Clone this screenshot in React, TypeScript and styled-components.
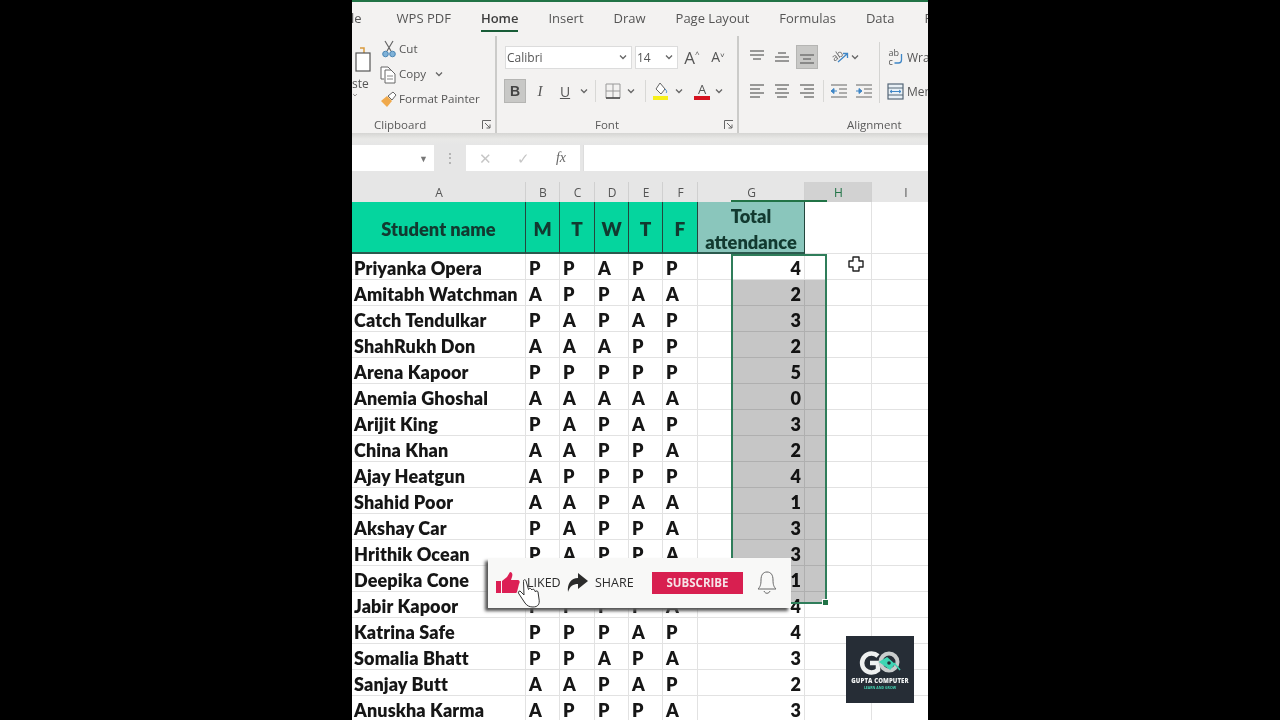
import React from "react";
import styled, { createGlobalStyle } from "styled-components";

const Global = createGlobalStyle`
  html, body { margin: 0; padding: 0; background: #000; height: 100%; overflow: hidden; }
  #root { height: 100%; }
`;
const COLS = "174px 34px 35px 34px 34px 35px 107px 67px 68px";

const Page = styled.div`height: 720px; background: #000; display: flex; justify-content: center; padding-left: 0;`;
const Frame = styled.div`
  position: relative; width: 576px; height: 720px; overflow: hidden; background: #fff;
  font-family: "Open Sans", "Liberation Sans", sans-serif; color: #444; filter: blur(0.4px);
`;
const TopLine = styled.div`height: 2px; background: #217346;`;
const Tabs = styled.div`height: 34px; background: #f3f2f1; display: flex; gap: 30px; margin-left: -11px; align-items: flex-start; padding-top: 8px; box-sizing: border-box; font-size: 13px; color: #555;`;
const Tab = styled.div<{ $on?: boolean; $mr?: number }>`
  height: 20px; line-height: 16px; white-space: nowrap; margin-right: ${(p) => p.$mr ?? 0}px;
  ${(p) => p.$on && `font-weight: 600; color: #3f3f3f; border-bottom: 2px solid #185c37;`}
`;
const Ribbon = styled.div`height: 97px; background: #f3f2f1; display: flex; overflow: hidden;`;
const Group = styled.div<{ $w: number; $sep?: boolean }>`
  flex: 0 0 ${(p) => p.$w}px; width: ${(p) => p.$w}px; display: flex; flex-direction: column; box-sizing: border-box;
  ${(p) => p.$sep && `border-left: 2px solid #cbcbc9;`}
`;
const GroupBody = styled.div`flex: 1; min-height: 0; display: flex;`;
const Footer = styled.div`height: 17px; margin-bottom: 0; display: flex; align-items: center; font-size: 11.5px; color: #5a5a5a; padding-right: 3px;`;
const FooterLabel = styled.span<{ $ml: number }>`margin-left: ${(p) => p.$ml}px; white-space: nowrap;`;
const Launcher = styled.svg`margin-left: auto; width: 10px; height: 10px;`;
const PasteCol = styled.div`width: 27px; display: flex; flex-direction: column; align-items: flex-start; padding-top: 5px; font-size: 12px; color: #555; line-height: 14px;`;
const PasteText = styled.span`margin-top: 5px;`;
const ClipCol = styled.div`display: flex; flex-direction: column; padding-top: 0;`;
const ClipRow = styled.div`height: 25px; display: flex; align-items: center; font-size: 11.6px; color: #555; white-space: nowrap;`;
const ClipIcon = styled.svg`width: 20px; height: 20px; flex: none;`;
const Rows = styled.div`padding-top: 9px; display: flex; flex-direction: column; gap: 10px;`;
const ToolRow = styled.div<{ $ml?: number }>`height: 24px; display: flex; align-items: center; margin-left: ${(p) => p.$ml ?? 0}px;`;
const Combo = styled.div<{ $w: number; $ml?: number }>`
  width: ${(p) => p.$w}px; height: 23px; margin-left: ${(p) => p.$ml ?? 0}px; box-sizing: border-box; background: #fff;
  border: 1px solid #dcdcdc; display: flex; align-items: center; justify-content: space-between; padding: 0 3px 0 1px;
  font-size: 12px; color: #555;
`;
const Tool = styled.div<{ $w: number; $ml?: number; $on?: boolean }>`
  flex: none; width: ${(p) => p.$w}px; height: 24px; margin-left: ${(p) => p.$ml ?? 0}px; display: flex; align-items: center; justify-content: center; box-sizing: border-box;
  font-size: 14px; color: #555;
  ${(p) => p.$on && `background: #c8c8c6; border: 1px solid #b5b5b3;`}
`;
const Bold = styled.span`font-family: "Liberation Sans", sans-serif; font-weight: 700; font-size: 14px; color: #444;`;
const Ital = styled.span`font-family: "Liberation Serif", serif; font-style: italic; font-size: 15px; color: #555;`;
const Under = styled.span`font-size: 14px; text-decoration: underline; color: #555;`;
const ToolSep = styled.div<{ $ml: number }>`flex: none; width: 1px; height: 22px; margin-left: ${(p) => p.$ml}px; background: #d8d8d6;`;
const BigA = styled.div<{ $size: number }>`font-size: ${(p) => p.$size}px; color: #555; line-height: 1; display: flex;`;
const Caret = styled.span`font-size: 8px; line-height: 10px;`;
const ColorA = styled.div`display: flex; flex-direction: column; align-items: center; font-size: 13px; line-height: 12px; color: #555;`;
const ColorBar = styled.div<{ $c: string }>`width: 16px; height: 4px; background: ${(p) => p.$c}; margin-top: 1px;`;
const AlignLeft = styled.div`width: 141px; flex: none; box-sizing: border-box; margin: 6px 0 13px; border-right: 1px solid #d4d4d2; display: flex;`;
const AlignRight = styled.div`padding-left: 7px; display: flex; flex-direction: column; gap: 10px; padding-top: 9px; font-size: 12px; color: #555; white-space: nowrap;`;
const AlignItem = styled.div`height: 24px; display: flex; align-items: center; gap: 3px;`;
const AlignRows = styled(Rows)`padding-top: 3px;`;

const FormulaBand = styled.div`height: 49px; box-sizing: border-box; padding: 12px 0 11px; background: linear-gradient(#d5d5d3 0, #e9e9e7 6px, #e6e6e6 12px); display: flex;`;
const NameBox = styled.div`width: 82px; background: #fff; display: flex; align-items: center; justify-content: flex-end; padding-right: 6px; box-sizing: border-box; font-size: 9px; color: #777;`;
const Grip = styled.div`width: 32px; text-align: center; color: #999; font-size: 12px; line-height: 26px;`;
const FxBox = styled.div`width: 114px; background: #fff; display: flex; align-items: center; justify-content: space-between; padding: 0 14px 0 13px; box-sizing: border-box; font-size: 15px; color: #c6c6c6;`;
const Fx = styled.span`font-family: "Liberation Serif", serif; font-style: italic; color: #666; font-size: 14px;`;
const FormulaInput = styled.div`flex: 1; margin-left: 3px; background: #fff; border-left: 1px solid #ddd;`;

const ColHeads = styled.div`height: 20px; display: grid; grid-template-columns: ${COLS}; background: #e6e6e6; font-size: 12px; color: #555;`;
const ColHead = styled.div<{ $on?: boolean }>`
  display: flex; align-items: center; justify-content: center; border-right: 1px solid #d0d0d0; box-sizing: border-box; padding-left: 1px;
  ${(p) => p.$on && `background: #d2d2d2; color: #217346; font-weight: 400;`}
`;
const Sheet = styled.div`position: relative; background: #fff; font-family: Lato, "Open Sans", sans-serif; font-weight: 800; color: #161616;`;
const HeadRow = styled.div`height: 52px; display: grid; grid-template-columns: ${COLS}; grid-template-rows: 52px; box-sizing: border-box;`;
const HeadCell = styled.div<{ $bg: string; $big?: boolean }>`
  background: ${(p) => p.$bg}; display: flex; align-items: center; justify-content: center; text-align: center; box-sizing: border-box;
  border-right: 1px solid #24463c; border-bottom: 2px solid #2b5a4e; color: #123a30; line-height: 26px; padding-top: 4px; min-height: 0; overflow: visible;
  font-size: ${(p) => (p.$big ? 19 : 18.3)}px;
`;
const BlankCell = styled.div`border-right: 1px solid #e2e2e2; border-bottom: 1px solid #e2e2e2;`;
const Row = styled.div`height: 26px; display: grid; grid-template-columns: ${COLS}; grid-template-rows: 26px; font-size: 18px; letter-spacing: 0.12px; white-space: nowrap;`;
const Cell = styled.div<{ $right?: boolean; $pl?: number }>`
  border-right: 1px solid #e2e2e2; border-bottom: 1px solid #e2e2e2; box-sizing: border-box; display: flex; align-items: center; line-height: 22px; padding-top: 3px; min-height: 0;
  padding-left: ${(p) => p.$pl ?? 3}px; ${(p) => p.$right && `justify-content: flex-end; padding-right: 3px;`}
  overflow: visible;
`;
const SelBox = styled.div`position: absolute; left: 379px; top: 52px; width: 96px; height: 350px; box-sizing: border-box; border: 2px solid #2f7d5a; pointer-events: none;`;
const SelFill = styled.div`position: absolute; left: 0; right: 0; top: 24px; bottom: 0; background: #c6c6c6; mix-blend-mode: multiply;`;
const SelHandle = styled.div`position: absolute; right: -4px; bottom: -4px; width: 5px; height: 5px; background: #217346; border: 1px solid #fff;`;
const HeadMark = styled.div`position: absolute; left: 379px; top: -2px; width: 96px; height: 2px; background: #217346;`;
const PlusCursor = styled.svg`position: absolute; left: 494px; top: 254px; width: 20px; height: 20px;`;
const Popup = styled.div`
  position: absolute; left: 136px; top: 558px; width: 303px; height: 50px; background: #f8f8f7; box-shadow: -3px 3px 3px #555;
  display: flex; align-items: center; font-size: 12.5px; color: #2c2c2c; font-family: "Open Sans", sans-serif; line-height: 16px; padding-bottom: 1px; box-sizing: border-box;
`;
const Thumb = styled.svg`width: 26px; height: 24px; margin-left: 7px; flex: none;`;
const Liked = styled.span`margin-left: 6px; width: 36px;`;
const ShareIcon = styled.svg`width: 24px; height: 22px; margin-left: 2px; flex: none;`;
const ShareText = styled.span`margin-left: 6px; width: 57px;`;
const SubBtn = styled.div`width: 91px; height: 22px; background: #d81f50; color: #f6e4e8; font-weight: 700; font-size: 11.5px; display: flex; align-items: center; justify-content: center; flex: none;`;
const Bell = styled.svg`width: 22px; height: 26px; margin-left: 13px; flex: none;`;
const Hand = styled.svg`position: absolute; left: 165px; top: 578px; width: 24px; height: 30px;`;
const Logo = styled.div`position: absolute; left: 494px; top: 636px; width: 68px; height: 67px; background: #262d36; display: flex; flex-direction: column; align-items: center; box-sizing: border-box; padding-top: 14px;`;
const LogoArt = styled.svg`width: 48px; height: 26px; flex: none;`;
const LogoName = styled.div`font-size: 6px; font-weight: 800; color: #f2f4f4; letter-spacing: 0.1px; white-space: nowrap; line-height: 7px; margin-top: 2px; font-family: "Open Sans", sans-serif;`;
const LogoSub = styled.div`font-size: 3.5px; font-weight: 700; color: #45d6b5; white-space: nowrap; line-height: 5px; font-family: "Open Sans", sans-serif;`;

const Chev = ({ w = 10 }: { w?: number }) => (
  <svg width={w} height="8" viewBox="0 0 10 8"><path d="M2 2.5 5 5.5 8 2.5" fill="none" stroke="#666" strokeWidth="1.3" /></svg>
);
const Lines = ({ ys, xs }: { ys: number[]; xs: [number, number][] }) => (
  <svg width="20" height="20" viewBox="0 0 20 20">
    {ys.map((y, i) => (
      <line key={i} x1={xs[i][0]} x2={xs[i][1]} y1={y} y2={y} stroke="#666" strokeWidth="1.3" />
    ))}
  </svg>
);
const LauncherIcon = () => (
  <Launcher viewBox="0 0 10 10"><path d="M.5 9V.5H9M3 3l5 5M8 4.5V8H4.5" fill="none" stroke="#666" strokeWidth="1" /></Launcher>
);
const Indent = ({ flip }: { flip?: boolean }) => (
  <svg width="20" height="20" viewBox="0 0 20 20">
    <path d="M2 4h16M10 8h8M10 12h8M2 16h16" stroke="#666" strokeWidth="1.2" />
    <path d={flip ? "M2 10h5M5 7.5 8 10l-3 2.5z" : "M3 10h5M5 7.5 2 10l3 2.5z"} stroke="#3f86c6" fill="#3f86c6" strokeWidth="1" />
  </svg>
);

const data: [string, string, number][] = [
  ["Priyanka Opera", "PPAPP", 4], ["Amitabh Watchman", "APPAA", 2], ["Catch Tendulkar", "PAPAP", 3],
  ["ShahRukh Don", "AAAPP", 2], ["Arena Kapoor", "PPPPP", 5], ["Anemia Ghoshal", "AAAAA", 0],
  ["Arijit King", "PAPAP", 3], ["China Khan", "AAPPA", 2], ["Ajay Heatgun", "APPPP", 4],
  ["Shahid Poor", "AAPAA", 1], ["Akshay Car", "PAPPA", 3], ["Hrithik Ocean", "PAPPA", 3],
  ["Deepika Cone", "PAPPA", 1], ["Jabir Kapoor", "PPPPA", 4], ["Katrina Safe", "PPPAP", 4],
  ["Somalia Bhatt", "PPAPA", 3], ["Sanjay Butt", "AAPAP", 2], ["Anuskha Karma", "APPPA", 3],
];

export default function App() {
  return (
    <Page>
      <Global />
      <Frame>
        <TopLine />
        <Tabs>
          <Tab $mr={5}>File</Tab>
          <Tab>WPS PDF</Tab>
          <Tab $on>Home</Tab>
          <Tab>Insert</Tab>
          <Tab>Draw</Tab>
          <Tab>Page Layout</Tab>
          <Tab>Formulas</Tab>
          <Tab>Data</Tab>
          <Tab>Review</Tab>
        </Tabs>
        <Ribbon>
          <Group $w={143}>
            <GroupBody>
              <PasteCol>
                <svg width="20" height="31" viewBox="0 0 20 31">
                  <path d="M-4 8h4M8 7h4v6" fill="none" stroke="#d99a3c" strokeWidth="1.5" />
                  <rect x="4" y="12" width="14" height="18" fill="#fff" stroke="#555" strokeWidth="1.2" />
                </svg>
                <PasteText>ste</PasteText>
                <Chev w={6} />
              </PasteCol>
              <ClipCol>
                <ClipRow>
                  <ClipIcon viewBox="0 0 20 20">
                    <path d="M6 2l6 10M14 2 8 12" stroke="#666" strokeWidth="1.2" fill="none" />
                    <circle cx="6.5" cy="15" r="2.8" fill="#7fb2d8" stroke="#4a86b5" />
                    <circle cx="13.5" cy="15" r="2.8" fill="#7fb2d8" stroke="#4a86b5" />
                  </ClipIcon>
                  Cut
                </ClipRow>
                <ClipRow>
                  <ClipIcon viewBox="0 0 20 20">
                    <path d="M5 15H2V3h7l3 3" fill="#fff" stroke="#666" />
                    <path d="M6 6h6l4 4v9H6z" fill="#fff" stroke="#666" />
                    <path d="M8 12h6M8 15h6" stroke="#888" />
                  </ClipIcon>
                  Copy
                  <Tool $w={12} $ml={7}><Chev /></Tool>
                </ClipRow>
                <ClipRow>
                  <ClipIcon viewBox="0 0 20 20">
                    <path d="M2 12l6-5 5 5-5 6z" fill="#f0a94b" />
                    <path d="M9 7l5-4 3 3-4 5z" fill="#fff" stroke="#666" />
                  </ClipIcon>
                  Format Painter
                </ClipRow>
              </ClipCol>
            </GroupBody>
            <Footer>
              <FooterLabel $ml={22}>Clipboard</FooterLabel>
              <LauncherIcon />
            </Footer>
          </Group>
          <Group $w={242} $sep>
            <GroupBody>
              <Rows>
                <ToolRow $ml={8}>
                  <Combo $w={127}>Calibri<Chev /></Combo>
                  <Combo $w={43} $ml={3}>14<Chev /></Combo>
                  <Tool $w={22} $ml={3}><BigA $size={17}>A<Caret>^</Caret></BigA></Tool>
                  <Tool $w={20} $ml={5}><BigA $size={14}>A<Caret>˅</Caret></BigA></Tool>
                </ToolRow>
                <ToolRow $ml={7}>
                  <Tool $w={22} $on><Bold>B</Bold></Tool>
                  <Tool $w={20} $ml={4}><Ital>I</Ital></Tool>
                  <Tool $w={20} $ml={5}><Under>U</Under></Tool>
                  <Tool $w={10} $ml={4}><Chev /></Tool>
                  <ToolSep $ml={6} />
                  <Tool $w={20} $ml={7}>
                    <svg width="18" height="18" viewBox="0 0 18 18">
                      <path d="M2 2h14v14H2zM9 2v14M2 9h14" fill="none" stroke="#999" />
                      <path d="M2 16h14" stroke="#333" strokeWidth="1.3" />
                    </svg>
                  </Tool>
                  <Tool $w={10} $ml={3}><Chev /></Tool>
                  <ToolSep $ml={9} />
                  <Tool $w={20} $ml={5}>
                    <svg width="18" height="20" viewBox="0 0 18 20">
                      <path d="M8 2l5 6-4 5-5-5z" fill="#fff" stroke="#666" />
                      <path d="M13 8c2 2 2 3 1 4" stroke="#3f86c6" fill="none" />
                      <rect x="1" y="15" width="15" height="4" fill="#f7f01c" />
                    </svg>
                  </Tool>
                  <Tool $w={10} $ml={3}><Chev /></Tool>
                  <Tool $w={20} $ml={8}><ColorA>A<ColorBar $c="#d5121f" /></ColorA></Tool>
                  <Tool $w={10} $ml={2}><Chev /></Tool>
                </ToolRow>
              </Rows>
            </GroupBody>
            <Footer>
              <FooterLabel $ml={98}>Font</FooterLabel>
              <LauncherIcon />
            </Footer>
          </Group>
          <Group $w={273} $sep>
            <GroupBody>
              <AlignLeft>
                <AlignRows>
                  <ToolRow $ml={7}>
                    <Tool $w={22}><Lines ys={[4, 8, 12]} xs={[[3, 17], [3, 17], [6, 14]]} /></Tool>
                    <Tool $w={22} $ml={3}><Lines ys={[6, 10, 14]} xs={[[6, 14], [3, 17], [3, 17]]} /></Tool>
                    <Tool $w={22} $ml={3} $on><Lines ys={[8, 12, 16]} xs={[[3, 17], [6, 14], [3, 17]]} /></Tool>
                    <Tool $w={20} $ml={12}>
                      <svg width="20" height="20" viewBox="0 0 20 20">
                        <text x="2" y="13" fontSize="10" fill="#666" transform="rotate(-35 6 10)" fontFamily="Open Sans">ab</text>
                        <path d="M8 15 17 7M13 6.5h4.5V11" stroke="#3f86c6" fill="none" strokeWidth="1.3" />
                      </svg>
                    </Tool>
                    <Tool $w={10}><Chev /></Tool>
                  </ToolRow>
                  <ToolRow $ml={7}>
                    <Tool $w={22}><Lines ys={[4, 8, 12, 16]} xs={[[3, 17], [3, 13], [3, 17], [3, 13]]} /></Tool>
                    <Tool $w={22} $ml={3}><Lines ys={[4, 8, 12, 16]} xs={[[3, 17], [5, 15], [3, 17], [5, 15]]} /></Tool>
                    <Tool $w={22} $ml={3}><Lines ys={[4, 8, 12, 16]} xs={[[3, 17], [7, 17], [3, 17], [7, 17]]} /></Tool>
                    <ToolSep $ml={5} />
                    <Tool $w={20} $ml={5}><Indent /></Tool>
                    <Tool $w={20} $ml={5}><Indent flip /></Tool>
                  </ToolRow>
                </AlignRows>
              </AlignLeft>
              <AlignRight>
                <AlignItem>
                  <svg width="17" height="18" viewBox="0 0 16 18">
                    <text x="1" y="8" fontSize="9" fill="#555" fontFamily="Open Sans">ab</text>
                    <text x="1" y="17" fontSize="9" fill="#555" fontFamily="Open Sans">c</text>
                    <path d="M14 6v6a3 3 0 0 1-3 3H7" stroke="#3f86c6" fill="none" strokeWidth="1.3" />
                  </svg>
                  Wrap Text
                </AlignItem>
                <AlignItem>
                  <svg width="17" height="17" viewBox="0 0 17 17">
                    <rect x="1" y="1" width="15" height="15" fill="#e8f0f6" stroke="#567" strokeWidth="1.2" />
                    <path d="M1 5h15M1 12h15" stroke="#567" />
                    <path d="M3 8.5h11M5 7l-2 1.5L5 10M12 7l2 1.5L12 10" stroke="#3f86c6" fill="none" />
                  </svg>
                  Merge &amp; Center
                </AlignItem>
              </AlignRight>
            </GroupBody>
            <Footer>
              <FooterLabel $ml={108}>Alignment</FooterLabel>
            </Footer>
          </Group>
        </Ribbon>
        <FormulaBand>
          <NameBox>▼</NameBox>
          <Grip>⋮</Grip>
          <FxBox>
            <span>✕</span>
            <span>✓</span>
            <Fx>fx</Fx>
          </FxBox>
          <FormulaInput />
        </FormulaBand>
        <ColHeads>
          {["A", "B", "C", "D", "E", "F", "G"].map((c) => (
            <ColHead key={c}>{c}</ColHead>
          ))}
          <ColHead $on>H</ColHead>
          <ColHead>I</ColHead>
        </ColHeads>
        <Sheet>
          <HeadRow>
            <HeadCell $bg="#05d59e">Student name</HeadCell>
            {["M", "T", "W", "T", "F"].map((c, i) => (
              <HeadCell key={i} $bg="#05d59e" $big>{c}</HeadCell>
            ))}
            <HeadCell $bg="#8ac6bc">Total<br />attendance</HeadCell>
            <BlankCell />
            <BlankCell />
          </HeadRow>
          {data.map(([name, marks, total]) => (
            <Row key={name}>
              <Cell $pl={2}>{name}</Cell>
              {marks.split("").map((m, i) => (
                <Cell key={i} $pl={3}>{m}</Cell>
              ))}
              <Cell $right>{total}</Cell>
              <Cell />
              <Cell />
            </Row>
          ))}
          <HeadMark />
          <SelBox>
            <SelFill />
            <SelHandle />
          </SelBox>
        </Sheet>
        <PlusCursor viewBox="0 0 20 20">
          <path d="M7 3h6v4h4v6h-4v4H7v-4H3V7h4z" fill="#fff" stroke="#222" strokeWidth="1.4" strokeLinejoin="round" />
        </PlusCursor>
        <Popup>
          <Thumb viewBox="0 0 26 24">
            <rect x="1" y="10" width="5" height="12" fill="#dc1f54" />
            <path d="M7 10l5-4 3-5c2 0 3 2 2 5l-1 3h7c2 0 2 3 1 4l-2 8c-.5 1-1 1-2 1H7z" fill="#dc1f54" />
          </Thumb>
          <Liked>LIKED</Liked>
          <ShareIcon viewBox="0 0 24 22">
            <path d="M13 1l10 8-10 8v-5C8 12 5 14 3 20 2 12 6 6 13 6z" fill="#2b2b2b" />
          </ShareIcon>
          <ShareText>SHARE</ShareText>
          <SubBtn>SUBSCRIBE</SubBtn>
          <Bell viewBox="0 0 22 26">
            <path d="M11 2c-4 0-6 3-6 8 0 5-1 7-3 9h18c-2-2-3-4-3-9 0-5-2-8-6-8z" fill="none" stroke="#666" strokeWidth="1" />
            <path d="M8 21c1 3 5 3 6 0" fill="none" stroke="#666" />
          </Bell>
        </Popup>
        <Hand viewBox="0 0 24 30">
          <path d="M7 17 3 13c-2 0-2 2-1 3l6 9c2 3 5 4 8 4 5 0 7-3 6-8l-1-7c-.5-1.500-2-1.500-2.500 0l-1-2c-.5-1-2-1-2.500 0l-1-1c-.5-1-2-1-2.500.5L9 3c-.5-2-3-1.500-2.500.5z" fill="#fff" stroke="#333" strokeWidth="1" />
        </Hand>
        <Logo>
          <LogoArt viewBox="0 0 48 26">
            <path d="M22 6A9.500 9.500 0 1 0 22 20V13H14" fill="none" stroke="#eef0f0" strokeWidth="4.500" />
            <circle cx="33" cy="12" r="8.500" fill="none" stroke="#c9cccc" strokeWidth="4" />
            <path d="M24 12l10 7 4-5-7-6zM38 13l6 7" fill="#3fd6b4" stroke="#3fd6b4" strokeWidth="1.500" />
            <circle cx="33" cy="13" r="1.800" fill="#262d36" />
          </LogoArt>
          <LogoName>GUPTA COMPUTER</LogoName>
          <LogoSub>LEARN AND GROW</LogoSub>
        </Logo>
      </Frame>
    </Page>
  );
}
